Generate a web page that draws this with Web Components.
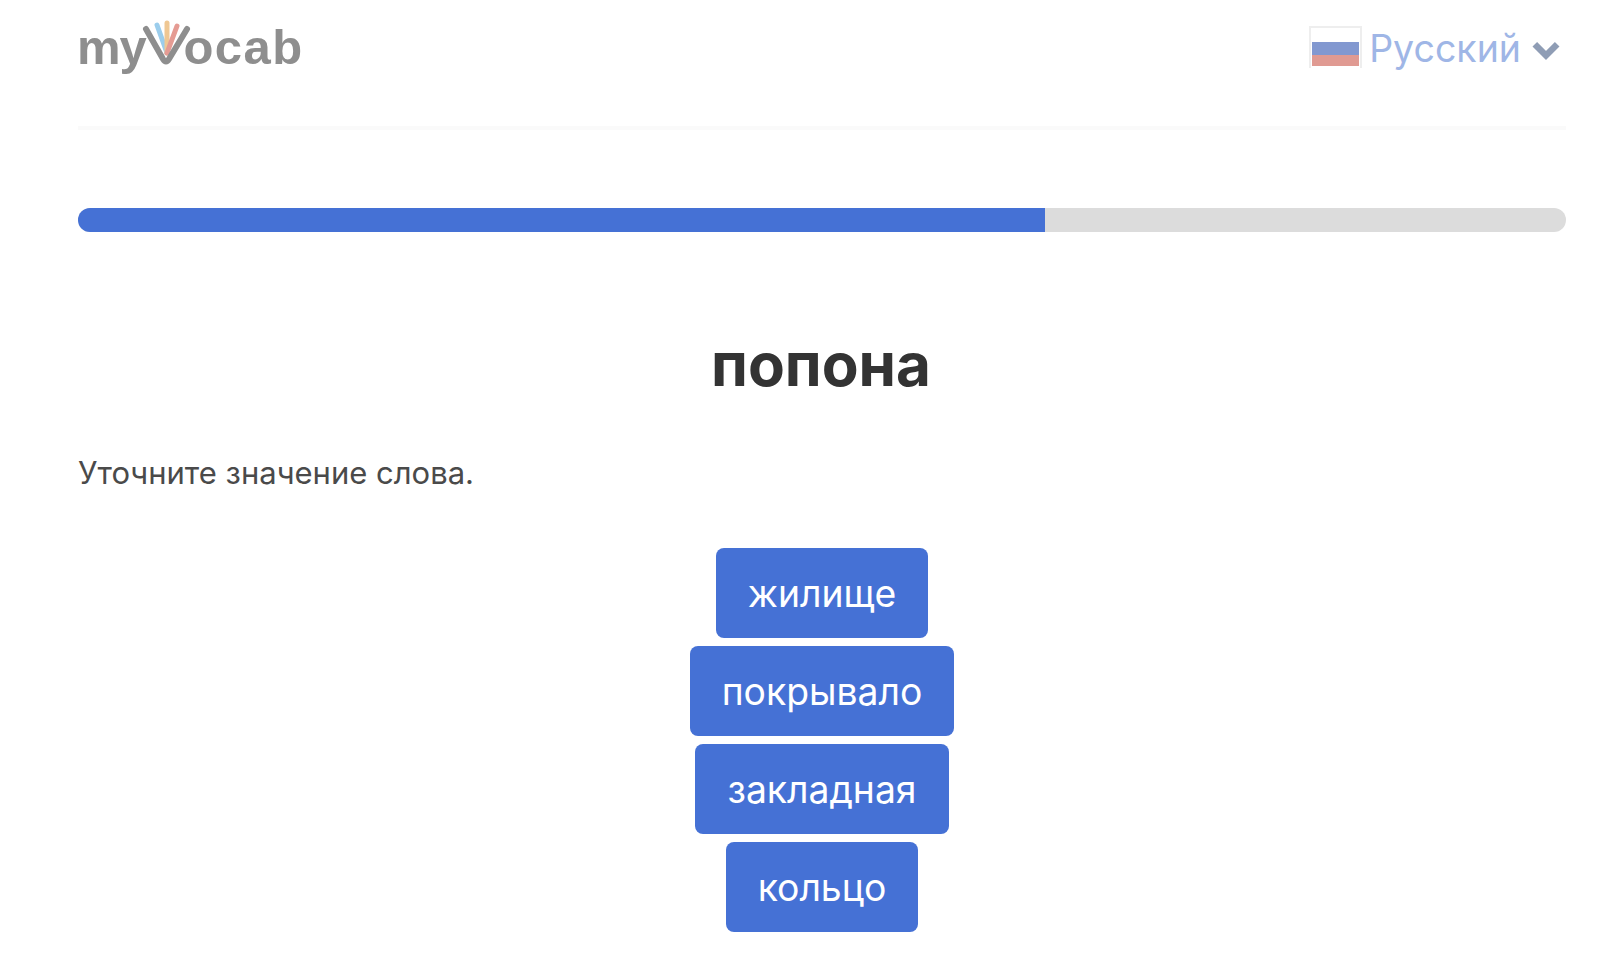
<!DOCTYPE html>
<html lang="ru"><head><meta charset="utf-8"><title>myVocab</title>
<style>html,body{margin:0;background:#fff}body{font-family:Inter,"Liberation Sans",sans-serif}</style></head>
<body>
<vocab-app>
  <vocab-header></vocab-header>
  <vocab-progress value="65"></vocab-progress>
  <vocab-question word="попона" prompt="Уточните значение слова.">
    <vocab-choice>жилище</vocab-choice>
    <vocab-choice>покрывало</vocab-choice>
    <vocab-choice>закладная</vocab-choice>
    <vocab-choice>кольцо</vocab-choice>
  </vocab-question>
</vocab-app>
<script>
function def(name, html, cls){
  customElements.define(name, class extends HTMLElement{
    constructor(){super();this.attachShadow({mode:'open'}).innerHTML=html;}
    connectedCallback(){cls&&cls(this);}
  });
}
def('vocab-app',`<style>:host{display:block;height:960px;box-sizing:border-box;padding:0 40px 0 78px;overflow:hidden}</style><slot></slot>`);
def('vocab-header',`<style>
:host{display:flex;justify-content:space-between;height:126px;border-bottom:4px solid #fafafa;box-sizing:content-box}
.logo{display:flex;align-items:flex-start;height:80px;font:700 49px/48px "Liberation Sans",sans-serif;color:#8e8e8e;padding-top:23px;margin-left:-1px;box-sizing:border-box}
.my{letter-spacing:-1px}
.ocab{letter-spacing:1.5px}
.logo svg{margin:-3px -7px 0 -2.4px;flex:none;overflow:visible}
.lang{display:flex;align-items:flex-start;padding-top:26px;color:#9fb6e6;font:400 37.5px/46px Inter,sans-serif}
.flag{width:53px;height:42px;margin:0 7px 0 0;flex:none;display:block}
.chev{margin:16px 6px 0 11px;flex:none}
</style>
<div class="logo"><span class="my">my</span><svg width="47" height="48" viewBox="0 0 47 48"><path d="M14 5 24 33" stroke="#9bcdec" stroke-width="5" stroke-linecap="round"/><path d="M24 3V33" stroke="#efc793" stroke-width="5" stroke-linecap="round"/><path d="M34 6 24 33" stroke="#e59b93" stroke-width="5" stroke-linecap="round"/><path d="M3 9 20 39Q23 44 26 39L44 9" fill="none" stroke="#8e8e8e" stroke-width="6" stroke-linecap="round"/></svg><span class="ocab">ocab</span></div>
<div class="lang"><svg class="flag" viewBox="0 0 53 42"><path d="M1 42V1H52V42" fill="#fff" stroke="#eee" stroke-width="2"/><rect x="3" y="16" width="47" height="13" fill="#8298d0"/><rect x="3" y="29" width="47" height="11" fill="#e09a92"/></svg><span>Русский</span><svg class="chev" width="28" height="19" viewBox="0 0 28 19"><path d="M2.800 2.300 14 13.500 25.200 2.300" fill="none" stroke="#8f9db5" stroke-width="6.500"/></svg></div>`);
def('vocab-progress',`<style>
:host{display:block;height:24px;margin-top:78px;background:#dcdcdc;border-radius:12px;overflow:hidden}
.fill{height:100%;background:#4571d5}
</style><div class="fill"></div>`,el=>{el.shadowRoot.querySelector('.fill').style.width='967px'});
def('vocab-question',`<style>
:host{display:block}
h1{margin:97px 2px 0 0;text-align:center;font:700 60.200px/72px Inter,sans-serif;color:#333}
p{margin:52px 0 0;font:400 31px/40px Inter,sans-serif;color:#4a4a4a}
.list{display:flex;flex-direction:column;align-items:center;gap:8px;margin-top:55px}
</style><h1></h1><p></p><div class="list"><slot></slot></div>`,el=>{
  el.shadowRoot.querySelector('h1').textContent=el.getAttribute('word');
  el.shadowRoot.querySelector('p').textContent=el.getAttribute('prompt');
});
def('vocab-choice',`<style>
:host{display:block}
button{all:unset;display:block;box-sizing:border-box;height:90px;padding:0 32px;background:#4571d5;color:#fff;border-radius:8px;font:400 37.300px/92px Inter,sans-serif;text-align:center;cursor:pointer}
</style><button><slot></slot></button>`);
</script>
</body></html>
